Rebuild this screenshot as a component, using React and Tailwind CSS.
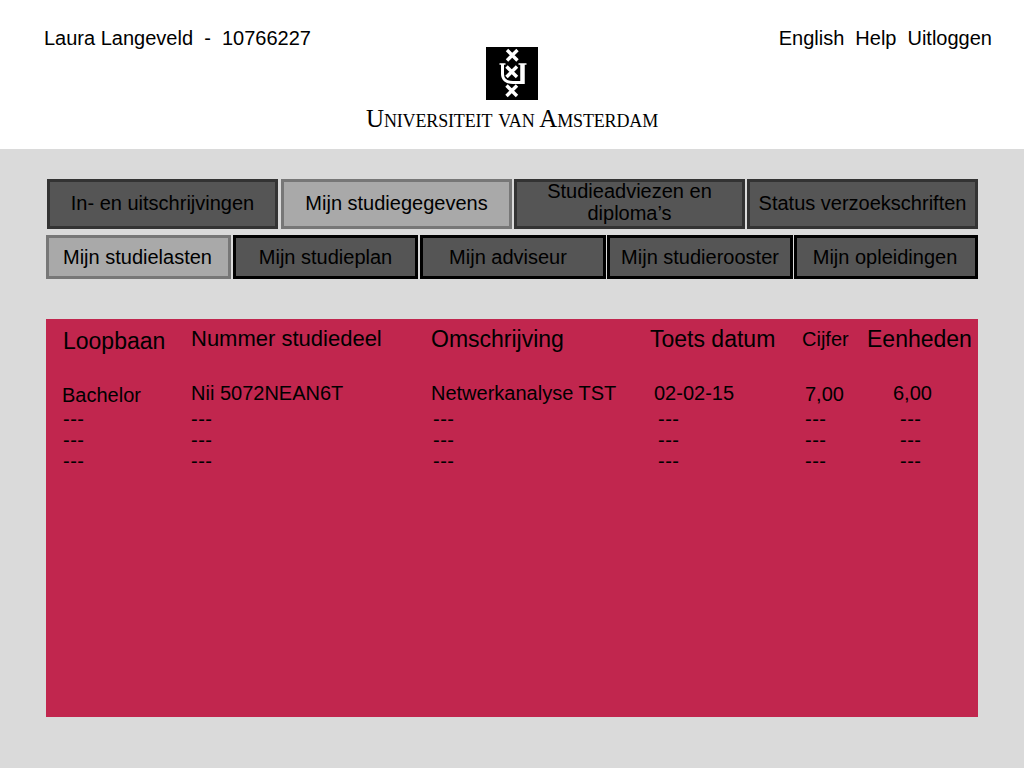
import React from 'react'

const mainTabs = [
  { label: 'In- en uitschrijvingen', extra: 'pb-[2px]' },
  { label: 'Mijn studiegegevens', active: true, extra: 'ml-px pb-[2px]' },
  { label: 'Studieadviezen en diploma’s', wrap: true, extra: 'pb-[4px]' },
  { label: 'Status verzoekschriften', extra: 'pb-[2px]' },
]

const subTabs = [
  { label: 'Mijn studielasten', active: true, extra: 'pr-[2px]' },
  { label: 'Mijn studieplan', extra: 'ml-px' },
  { label: 'Mijn adviseur', extra: 'ml-px pr-[10px]' },
  { label: 'Mijn studierooster' },
  { label: 'Mijn opleidingen', extra: 'pr-[2px]' },
]

const columns = [
  {
    title: 'Loopbaan',
    value: 'Bachelor',
    titleClass: 'text-[23px] mt-[2px]',
    valueClass: 'mt-[29px] -ml-px',
    dashClass: '',
    dashTop: 'mt-[2px]',
  },
  {
    title: 'Nummer studiedeel',
    value: 'Nii 5072NEAN6T',
    titleClass: 'text-[22px]',
    valueClass: 'mt-[29px]',
    dashClass: '',
    dashTop: 'mt-[4px]',
  },
  {
    title: 'Omschrijving',
    value: 'Netwerkanalyse TST',
    titleClass: 'text-[23px]',
    valueClass: 'mt-[29px]',
    dashClass: 'ml-[2px]',
    dashTop: 'mt-[4px]',
  },
  {
    title: 'Toets datum',
    value: '02-02-15',
    titleClass: 'text-[23px]',
    valueClass: 'mt-[29px] ml-[4px]',
    dashClass: 'ml-[8px]',
    dashTop: 'mt-[4px]',
  },
  {
    title: 'Cijfer',
    value: '7,00',
    titleClass: 'text-[20px]',
    valueClass: 'mt-[30px] ml-[3px]',
    dashClass: 'ml-[3px]',
    dashTop: 'mt-[3px]',
  },
  {
    title: 'Eenheden',
    value: '6,00',
    titleClass: 'text-[23px]',
    valueClass: 'mt-[29px] ml-[26px]',
    dashClass: 'ml-[33px]',
    dashTop: 'mt-[4px]',
  },
]

const UvaLogo = () => (
  <svg viewBox="0 0 52 53" className="w-[52px] h-[53px] block" fill="none">
    <rect width="52" height="53" fill="#000" />
    <g stroke="#fff" strokeWidth="3.4">
      <path d="M21 3l10.500 10.500M31.500 3L21 13.500" />
      <path d="M20.500 19.500L31 30M31 19.500L20.500 30" />
      <path d="M20.500 38.500L31 49M31 38.500L20.500 49" />
    </g>
    <path d="M16.500 17v10C16.500 32.500 20.500 35.500 27 35.500h8" stroke="#fff" strokeWidth="3" />
    <path d="M36.500 17v20" stroke="#fff" strokeWidth="4.500" />
    <path d="M13.500 17h6M32.500 17h8" stroke="#fff" strokeWidth="1.500" />
  </svg>
)

const Tab = ({ label, active, dark, wrap, extra = '' }) => {
  const look = active
    ? 'bg-[#a9a9a9] border-[#777777]'
    : dark
      ? 'bg-[#555555] border-black'
      : 'bg-[#555555] border-[#333333]'

  return (
    <div className={`flex items-center justify-center border-[3px] text-center text-[20px] text-black ${wrap ? 'leading-[22px] px-6' : 'leading-none'} ${look} ${extra}`}>
      {label}
    </div>
  )
}

const StudyColumn = ({ title, value, titleClass, valueClass, dashClass, dashTop }) => (
  <div className="flex flex-col text-black text-[20px]">
    <div className={`leading-[26px] whitespace-nowrap ${titleClass}`}>{title}</div>
    <div className={`leading-[24px] whitespace-nowrap ${valueClass}`}>{value}</div>
    <div className={`tracking-[0.5px] leading-[21px] ${dashTop} ${dashClass}`}>---</div>
    <div className={`tracking-[0.5px] leading-[21px] ${dashClass}`}>---</div>
    <div className={`tracking-[0.5px] leading-[21px] ${dashClass}`}>---</div>
  </div>
)

const App = () => {
  return (
    <div className="w-[1024px] h-[768px] overflow-hidden bg-[#dadada] font-['Liberation_Sans',Arial,sans-serif]">
      <header className="h-[149px] bg-white grid grid-cols-[1fr_auto_1fr] px-[32px] text-[20px] leading-[24px] text-black">
        <div className="ml-[12px] mt-[26px] whitespace-pre">Laura Langeveld  -  10766227</div>
        <div className="flex flex-col items-center pt-[47px]">
          <UvaLogo />
          <div className="mt-[6px] font-['Liberation_Serif',serif] text-[25px] tracking-[-0.15px] leading-[26px] [font-variant:small-caps] whitespace-nowrap">
            Universiteit van Amsterdam
          </div>
        </div>
        <div className="flex justify-end gap-[11px] mt-[26px]">
          <span>English</span>
          <span>Help</span>
          <span>Uitloggen</span>
        </div>
      </header>

      <main className="px-[46px]">
        <nav className="mt-[30px] ml-px grid grid-cols-[231px_232px_231px_231px] grid-rows-[50px] gap-x-[2px]">
          {mainTabs.map((tab) => (
            <Tab key={tab.label} {...tab} />
          ))}
        </nav>
        <nav className="mt-[6px] grid grid-cols-[185px_186px_187px_186px_184px] grid-rows-[44px] gap-x-px">
          {subTabs.map((tab) => (
            <Tab key={tab.label} dark {...tab} />
          ))}
        </nav>

        <section className="mt-[40px] h-[398px] bg-[#c1264e] pl-[17px] pt-[7px] grid grid-cols-[128px_240px_219px_152px_65px_1fr] items-start">
          {columns.map((col) => (
            <StudyColumn key={col.title} {...col} />
          ))}
        </section>
      </main>
    </div>
  )
}

export default App
